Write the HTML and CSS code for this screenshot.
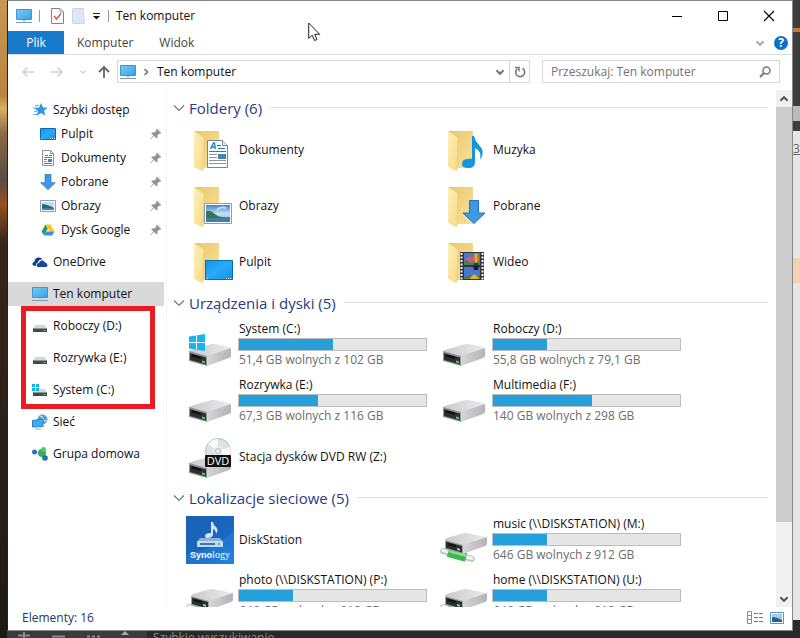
FILE: index.html
```html
<!DOCTYPE html>
<html lang="pl">
<head>
<meta charset="utf-8">
<title>Ten komputer</title>
<link rel="stylesheet" href="styles.css">
</head>
<body>
<svg class="sprite" aria-hidden="true">
  <defs>
    <linearGradient id="g-screen" x1="0" y1="0" x2="1" y2="1"><stop offset="0" stop-color="#7cc9f5"/><stop offset="1" stop-color="#35a3e8"/></linearGradient>
    <linearGradient id="g-desk" x1="0" y1="0" x2="1" y2="1"><stop offset="0" stop-color="#1295e8"/><stop offset=".5" stop-color="#2aa9f8"/><stop offset="1" stop-color="#0e93ea"/></linearGradient>
    <linearGradient id="g-back" x1="0" y1="0" x2="1" y2="1"><stop offset="0" stop-color="#e9c76b"/><stop offset="1" stop-color="#fbe29a"/></linearGradient>
    <linearGradient id="g-flap" x1="0" y1="0" x2="1" y2="1"><stop offset="0" stop-color="#fff0b8"/><stop offset="1" stop-color="#f7d987"/></linearGradient>
    <linearGradient id="g-top" x1="0" y1="0" x2="1" y2="0"><stop offset="0" stop-color="#c9c9cc"/><stop offset="1" stop-color="#ececee"/></linearGradient>
    <linearGradient id="g-side" x1="0" y1="0" x2="1" y2="0"><stop offset="0" stop-color="#d6d6d9"/><stop offset="1" stop-color="#b4b4b8"/></linearGradient>
    <linearGradient id="g-sky" x1="0" y1="0" x2="0" y2="1"><stop offset="0" stop-color="#3f7fd0"/><stop offset=".5" stop-color="#c3e2f5"/><stop offset="1" stop-color="#7fb2dc"/></linearGradient>
    <linearGradient id="g-syn" x1="0" y1="0" x2="1" y2="1"><stop offset="0" stop-color="#1a61b5"/><stop offset=".6" stop-color="#1967c0"/><stop offset="1" stop-color="#1f80dc"/></linearGradient>
  </defs>
  <symbol id="computer" viewBox="0 0 16 16"><path d="M.5 1.5h15v10H.5z" fill="url(#g-screen)" stroke="#4193cc"/><path d="M6 12h4v1.5H6z" fill="#b5d3e8"/><path d="M0 14.5h16" stroke="#7e9bb0"/></symbol>
  <symbol id="folder" viewBox="0 0 48 48"><path d="M8 5h25v37H14z" fill="url(#g-back)"/><path d="M8 5l9 6q1 1 1 2l-1 31q0 1-1 1l-8-4z" fill="url(#g-flap)"/><path d="M18 13l-1 31" stroke="#e6c676" stroke-width=".6"/></symbol>
  <symbol id="drive" viewBox="0 0 48 48"><path d="M3 31q0-1 2-2l20-6h3l16 3q1 0 1 2l-23 8z" fill="url(#g-top)"/><path d="M21 35l24-8v8q0 1-2 2l-22 8z" fill="url(#g-side)"/><path d="M3 30l18 5v10L3 40z" fill="#97979b"/><path d="M4 32l16 4.500v7L4 39z" fill="#2c302e"/><path d="M6 34.500l9 2.500" stroke="#0d0f0e" stroke-width="2"/><path d="M16 39.500l3 .8v2l-3-.8z" fill="#52d35a"/></symbol>
  <symbol id="winlogo" viewBox="0 0 16 17"><path d="M0 2.500l7-1V8H0zM8 1.300L16 0v8H8zM0 9h7v6.500l-7-1zM8 9h8v8l-8-1.300z" fill="#12b7ee"/></symbol>
  <symbol id="netdrive" viewBox="0 0 48 48"><path d="M3 35l29 8" stroke="#c3cac6" stroke-width="6" stroke-linecap="round"/><path d="M3 34.500l29 8" stroke="#f3f7f4" stroke-width="3" stroke-linecap="round"/><path d="M8 36.500l18 5" stroke="#3fb650" stroke-width="9"/><path d="M8 34.500l18 5" stroke="#86e091" stroke-width="3"/><path d="M5 24q0-1 2-2l17-5h3l19 4q1 0 1 2l-24 8z" fill="url(#g-top)"/><path d="M23 29l24-8v7q0 1-2 2l-22 8z" fill="url(#g-side)"/><path d="M5 24l18 5v9L5 33z" fill="#a2a2a5"/><path d="M6 25.500l16 4.500v6.500L6 32z" fill="#2b2d2f"/><path d="M8 28l8 2.300" stroke="#111" stroke-width="2"/><path d="M17 32l3 .8v2l-3-.8z" fill="#8ed8a0"/></symbol>
  <symbol id="arrow" viewBox="0 0 24 24"><path d="M7.500.5h9V13h6.500L12 23.500 1 13h6.500z" fill="#3d99e8" stroke="#2672b8"/></symbol>
  <symbol id="photo" viewBox="0 0 28 21"><path d="M.5.5h27v20H.5z" fill="#fff" stroke="#8d9dab"/><path d="M2 2h24v17H2z" fill="url(#g-sky)"/><path d="M2 8q5-1 9 3t15 3v1H2z" fill="#3a7553"/><path d="M2 15h24v4H2z" fill="#3f7fae"/><path d="M13 7q4-4 9-2" stroke="#fff" stroke-width="2" fill="none" opacity=".6"/></symbol>
  <symbol id="desktop" viewBox="0 0 28 20"><path d="M.5.5h27v19H.5z" fill="url(#g-desk)" stroke="#0b6cad"/><path d="M2 18.500h1m18 0h1m1 0h1m1 0h1" stroke="#fff"/></symbol>
  <symbol id="document" viewBox="0 0 21 28"><path d="M.5.5h15l5 5v22H.5z" fill="#fff" stroke="#7d858c"/><path d="M15.500.5v5h5" fill="#e6eaed" stroke="#7d858c"/><path d="M3.500 9l3-6h1l.8 6M5 7h3" fill="none" stroke="#1683c4" stroke-width="1.300"/><path d="M10 5.500h4M11 8.500h7M2 11.500h17" stroke="#1683c4"/><path d="M2 14.500h8M2 17.500h8M2 20.500h17M2 23.500h17" stroke="#8d969d"/><path d="M11 14h8v5h-8z" fill="#4384b3"/></symbol>
  <symbol id="minidrive" viewBox="0 0 16 16"><path d="M3 7h10l2 4H1z" fill="#d5d5d7"/><path d="M1 10.500h14V14H1z" fill="#45484a"/><path d="M1 10.500h14" stroke="#909396"/><path d="M11.500 12.500h2" stroke="#57d761"/></symbol>
  <symbol id="pin" viewBox="0 0 12 12"><path d="M7 .8L11.200 5l-1 .8-.8-.2-2 2 .2 2-1.100 1L4 8 .8 11.200l-.4-.4L3.500 7.500 1.200 5.200l1-1 2.200.2 2-2-.3-.8z" fill="#8c959d"/></symbol>
  <symbol id="chevron" viewBox="0 0 12 12"><path d="M1 3.500l5 5 5-5" fill="none" stroke="currentColor" stroke-width="1.200"/></symbol>
  <symbol id="chevron-bold" viewBox="0 0 10 10"><path d="M2 3.500l3 3 3-3" fill="none" stroke="currentColor" stroke-width="1.700"/></symbol>
  <symbol id="long-arrow" viewBox="0 0 14 14"><path d="M13 7H2M6.500 2.500L2 7l4.500 4.500" fill="none" stroke="currentColor" stroke-width="1.600"/></symbol>
</svg>

<div class="screen">
  <div class="wallpaper"></div>
  <main class="window">
    <header class="titlebar">
      <svg class="i16"><use href="#computer"/></svg>
      <span class="sep"></span>
      <button class="quick" aria-label="Właściwości"><svg width="13" height="16"><path d="M.5.5h8.500l3.500 3.500v11.500H.5z" fill="#fcfcfc" stroke="#85817c"/><path d="M9 .5V4h3.500" fill="none" stroke="#a5a19c"/><path d="M3 8l2.500 3L10 5.500" fill="none" stroke="#d9623f" stroke-width="1.600"/></svg></button>
      <button class="quick" aria-label="Nowy folder"><svg width="13" height="16"><path d="M.5.5h11v9l1 2v4H.5z" fill="#dbe5f4" stroke="#cbd8ec"/></svg></button>
      <button class="quick" aria-label="Dostosuj pasek"><svg width="7" height="8"><path d="M0 1.500h7" stroke="#222"/><path d="M0 4h7L3.500 7.500z" fill="#111"/></svg></button>
      <span class="sep"></span>
      <h1 class="title">Ten komputer</h1>
      <div class="controls">
        <button aria-label="Minimalizuj"><svg width="12" height="12"><path d="M1 6.500h10" stroke="#000"/></svg></button>
        <button aria-label="Maksymalizuj"><svg width="12" height="12"><path d="M1.500 1.500h9v9h-9z" fill="none" stroke="#000"/></svg></button>
        <button aria-label="Zamknij"><svg width="12" height="12"><path d="M1 1l10 10M11 1L1 11" stroke="#000" stroke-width="1.100"/></svg></button>
      </div>
    </header>

    <div class="tabs">
      <button class="tab tab-file">Plik</button>
      <button class="tab">Komputer</button>
      <button class="tab">Widok</button>
      <div class="tab-tools">
        <button class="expand" aria-label="Rozwiń wstążkę"><svg width="12" height="12"><use href="#chevron-bold"/></svg></button>
        <button class="help" aria-label="Pomoc">?</button>
      </div>
    </div>

    <div class="toolbar">
      <button class="go muted" aria-label="Wstecz"><svg width="14" height="14"><use href="#long-arrow"/></svg></button>
      <button class="go muted" aria-label="Dalej"><svg class="flip" width="14" height="14"><use href="#long-arrow"/></svg></button>
      <button class="go recent muted" aria-label="Ostatnie"><svg width="8" height="8"><use href="#chevron-bold"/></svg></button>
      <button class="go up" aria-label="W górę"><svg width="14" height="14"><path d="M7 13V2M2 7l5-5 5 5" fill="none" stroke="currentColor" stroke-width="1.800"/></svg></button>
      <div class="address">
        <svg class="i16"><use href="#computer"/></svg>
        <svg class="crumb" width="10" height="10"><use href="#chevron-bold"/></svg>
        <span class="path">Ten komputer</span>
        <button class="drop" aria-label="Poprzednie lokalizacje"><svg width="12" height="12"><use href="#chevron-bold"/></svg></button>
        <button class="refresh" aria-label="Odśwież"><svg width="12" height="12"><path d="M8.500 2.300A4.500 4.500 0 1 1 3.200 2.800" fill="none" stroke="currentColor" stroke-width="1.600"/><path d="M1 1.500h4v4" fill="none" stroke="currentColor" stroke-width="1.500"/></svg></button>
      </div>
      <label class="search">
        <input type="text" placeholder="Przeszukaj: Ten komputer" aria-label="Przeszukaj">
        <svg width="12" height="12"><circle cx="7.500" cy="4.500" r="3.500" fill="none" stroke="currentColor" stroke-width="1.500"/><path d="M5 7L1 11" stroke="currentColor" stroke-width="2"/></svg>
      </label>
    </div>

    <div class="panes">
      <nav class="nav">
        <div class="nav-group">
          <a class="nav-item" href="#"><svg class="i16" viewBox="0 0 16 16"><path d="M9 1l2 4.500 4.500.3-3.500 3 1.300 5L9 11l-4.500 3L6 9.500 2.500 6l4.700-.5z" fill="#2699ea"/><path d="M3 3.500h4M1 6h4M2 9.500h3M1 12.500h4" stroke="#58b7f3"/></svg>Szybki dostęp</a>
          <a class="nav-item sub" href="#"><svg class="i16" viewBox="0 0 16 16"><path d="M.5 2.500h15v11H.5z" fill="url(#g-desk)" stroke="#0b6cad"/><path d="M1 12.500h1m8 0h1m1 0h1m1 0h1" stroke="#fff"/></svg>Pulpit<svg class="pin"><use href="#pin"/></svg></a>
          <a class="nav-item sub" href="#"><svg class="i16" viewBox="0 0 16 16"><path d="M2.500.5h8l3 3v12h-11z" fill="#fff" stroke="#8c959c"/><path d="M10.500.5v3h3" fill="none" stroke="#8c959c"/><path d="M5 5.500h3M9 5.500h3M4 7.500h8M4 9.500h3M4 13.500h8" stroke="#2f8dc6"/><path d="M8 9h4v3H8z" fill="#4384b3"/><path d="M4 11.500h3" stroke="#8c959c"/></svg>Dokumenty<svg class="pin"><use href="#pin"/></svg></a>
          <a class="nav-item sub" href="#"><svg class="i16"><use href="#arrow"/></svg>Pobrane<svg class="pin"><use href="#pin"/></svg></a>
          <a class="nav-item sub" href="#"><svg class="i16" viewBox="0 0 16 16"><path d="M.5 2.500h15v11H.5z" fill="#fff" stroke="#8d9dab"/><path d="M2 4h12v8H2z" fill="#b8dcf2"/><path d="M2 6q4 0 12 4v2H2z" fill="#2f6175"/><path d="M2 10h12v2H2z" fill="#3f7fae"/></svg>Obrazy<svg class="pin"><use href="#pin"/></svg></a>
          <a class="nav-item sub" href="#"><svg class="i16" viewBox="0 0 16 16"><path d="M5.500 2.500L8 6.500 4 13.500l-2.500-4z" fill="#1fa463"/><path d="M5.500 2.500h5l4 7h-5z" fill="#fbc91a"/><path d="M6.500 9.500h8L12 13.500H4z" fill="#4285f4"/></svg>Dysk Google<svg class="pin"><use href="#pin"/></svg></a>
        </div>
        <a class="nav-item" href="#"><svg class="i16" viewBox="0 0 16 16"><path d="M1 11.500q-1.500-3 1.500-4Q3 3.500 7 3.500q2.500 0 3.500 2-4-.5-4.500 3Q3.500 9 4 12z" fill="#0c3f91"/><path d="M6 13q-2-.5-1-3 .7-1 2-1 .5-3 3.500-2.500 1.500 0 2.500 2 2.500.5 2.500 2.500T14 13z" fill="#14489c"/></svg>OneDrive</a>
        <a class="nav-item selected" href="#"><svg class="i16"><use href="#computer"/></svg>Ten komputer</a>
        <div class="marked">
          <a class="nav-item" href="#"><svg class="i16"><use href="#minidrive"/></svg>Roboczy (D:)</a>
          <a class="nav-item" href="#"><svg class="i16"><use href="#minidrive"/></svg>Rozrywka (E:)</a>
          <a class="nav-item" href="#"><svg class="i16" viewBox="0 0 16 16"><use href="#minidrive" width="16" height="16"/><path d="M0 2h3v3H0zM4 2h3v3H4zM0 6h3v3H0zM4 6h3v3H4z" fill="#16b5e5"/></svg>System (C:)</a>
        </div>
        <a class="nav-item" href="#"><svg class="i16" viewBox="0 0 16 16"><circle cx="10.500" cy="5.500" r="5" fill="#5d9fca"/><path d="M8 2q3 0 3 3t4 2M7 5q3 1 4 5" stroke="#d4ecf8" fill="none"/><path d="M.5 6.500L11 5v7.500L.5 13z" fill="#43aaed" stroke="#2583bf"/><path d="M3 15h6" stroke="#8fabbd"/></svg>Sieć</a>
        <a class="nav-item" href="#"><svg class="i16" viewBox="0 0 16 16"><path d="M3 7l7-1 3 6" stroke="#b1c9d4" fill="none"/><circle cx="2.500" cy="6" r="2.500" fill="#2d6fb8"/><circle cx="10" cy="7" r="4" fill="#35ae50"/><circle cx="11.500" cy="3.500" r="2.500" fill="#58c56c"/><circle cx="13" cy="12" r="2.800" fill="#1e73b3"/></svg>Grupa domowa</a>
      </nav>

      <div class="content">
        <section>
          <h2><svg width="12" height="12"><use href="#chevron"/></svg>Foldery (6)</h2>
          <div class="tiles">
            <a class="tile" href="#"><svg class="i48" viewBox="0 0 48 48"><use href="#folder" width="48" height="48"/><use href="#document" x="21" y="14" width="21" height="28"/></svg>Dokumenty</a>
            <a class="tile" href="#"><svg class="i48" viewBox="0 0 48 48"><use href="#folder" width="48" height="48"/><path d="M32 10h2q1 5 5 9 7 7 1 15 2-9-5-12v14q0 6-7 6-6 0-6-4 0-5 6-5 3-1 4 0z" fill="#1495dc"/></svg>Muzyka</a>
            <a class="tile" href="#"><svg class="i48" viewBox="0 0 48 48"><use href="#folder" width="48" height="48"/><use href="#photo" x="18" y="21" width="28" height="21"/></svg>Obrazy</a>
            <a class="tile" href="#"><svg class="i48" viewBox="0 0 48 48"><use href="#folder" width="48" height="48"/><use href="#arrow" x="22" y="18" width="24" height="24"/></svg>Pobrane</a>
            <a class="tile" href="#"><svg class="i48" viewBox="0 0 48 48"><use href="#folder" width="48" height="48"/><use href="#desktop" x="19" y="22" width="28" height="20"/></svg>Pulpit</a>
            <a class="tile" href="#"><svg class="i48" viewBox="0 0 48 48"><use href="#folder" width="48" height="48"/><path d="M20 14h24v28H20z" fill="#33353b"/><path d="M21.500 15v27M42.500 15v27" stroke="#f4f4f4" stroke-width="2" stroke-dasharray="2 1.500"/><path d="M24 15h16v12H24zM24 29h16v12H24z" fill="#4777cf"/><path d="M24 24q5-3 8 0t8-1v4H24zM24 39q6-3 16-1v3H24z" fill="#49834b"/><path d="M25 21l5-3 4 3-3 4z" fill="#d95a70"/><ellipse cx="36" cy="20" rx="3" ry="4.500" fill="#e7b52b"/><path d="M34 17v7M38 17v7" stroke="#bd3a22"/><path d="M33 27h6l-1 5h-4z" fill="#1c1d26"/><path d="M30 41q4-9 9 0z" fill="#e9ae2a"/><path d="M34 25h4v3h-4z" fill="#51311c"/></svg>Wideo</a>
          </div>
        </section>
        <section>
          <h2><svg width="12" height="12"><use href="#chevron"/></svg>Urządzenia i dyski (5)</h2>
          <div class="tiles">
            <a class="tile" href="#"><svg class="i48" viewBox="0 0 48 48"><use href="#drive" width="48" height="48"/><use href="#winlogo" x="3" y="13" width="16" height="17"/></svg><span class="info"><span class="name">System (C:)</span><span class="bar"><span class="fill" style="width:50%"></span></span><span class="free">51,4 GB wolnych z 102 GB</span></span></a>
            <a class="tile" href="#"><svg class="i48"><use href="#drive"/></svg><span class="info"><span class="name">Roboczy (D:)</span><span class="bar"><span class="fill" style="width:29%"></span></span><span class="free">55,8 GB wolnych z 79,1 GB</span></span></a>
            <a class="tile" href="#"><svg class="i48"><use href="#drive"/></svg><span class="info"><span class="name">Rozrywka (E:)</span><span class="bar"><span class="fill" style="width:42%"></span></span><span class="free">67,3 GB wolnych z 116 GB</span></span></a>
            <a class="tile" href="#"><svg class="i48"><use href="#drive"/></svg><span class="info"><span class="name">Multimedia (F:)</span><span class="bar"><span class="fill" style="width:53%"></span></span><span class="free">140 GB wolnych z 298 GB</span></span></a>
            <a class="tile" href="#"><svg class="i48" viewBox="0 0 48 48"><use href="#drive" width="48" height="48"/><circle cx="32" cy="18" r="12.500" fill="#dde4e4" stroke="#b4bcbd"/><path d="M32 18L22 11q4-5 10-5zM32 18l10 7q4-6 2-11z" fill="#f8fbfa"/><circle cx="32" cy="18" r="4" fill="#c5cfd1" stroke="#f5f5f5"/><circle cx="32" cy="18" r="1.500" fill="#fff"/><rect x="19" y="22" width="26" height="12" rx="1" fill="#101010"/><text class="dvd" x="32" y="32" text-anchor="middle">DVD</text></svg>Stacja dysków DVD RW (Z:)</a>
          </div>
        </section>
        <section>
          <h2><svg width="12" height="12"><use href="#chevron"/></svg>Lokalizacje sieciowe (5)</h2>
          <div class="tiles">
            <a class="tile" href="#"><svg class="i48" viewBox="0 0 48 48"><path d="M0 0h48v48H0z" fill="url(#g-syn)"/><path d="M0 38Q30 34 48 14v34H0z" fill="#2b8be2" opacity=".35"/><path d="M25 6h2q0 3 3 5 3 3 0 7 0-4-3-5v6q-1 3-5 3-3 0-3-2 0-3 6-3z" fill="#d5e5f5"/><path d="M14 22h20l3 4H11z" fill="#89b1da"/><path d="M11 25h26v6H11z" fill="#c5d9ed"/><path d="M14 28h15" stroke="#3976b3" stroke-width="2"/><path d="M32 28h2" stroke="#2e64a0"/><text class="syn" x="24" y="42" text-anchor="middle"><tspan class="syn-bold">Syno</tspan>logy</text></svg>DiskStation</a>
            <a class="tile" href="#"><svg class="i48"><use href="#netdrive"/></svg><span class="info"><span class="name">music (\\DISKSTATION) (M:)</span><span class="bar"><span class="fill" style="width:29%"></span></span><span class="free">646 GB wolnych z 912 GB</span></span></a>
            <a class="tile" href="#"><svg class="i48"><use href="#netdrive"/></svg><span class="info"><span class="name">photo (\\DISKSTATION) (P:)</span><span class="bar"><span class="fill" style="width:29%"></span></span><span class="free">646 GB wolnych z 912 GB</span></span></a>
            <a class="tile" href="#"><svg class="i48"><use href="#netdrive"/></svg><span class="info"><span class="name">home (\\DISKSTATION) (U:)</span><span class="bar"><span class="fill" style="width:29%"></span></span><span class="free">646 GB wolnych z 912 GB</span></span></a>
          </div>
        </section>
      </div>

      <div class="scroll">
        <button aria-label="Przewiń w górę"><svg class="turn" width="12" height="12"><use href="#chevron-bold"/></svg></button>
        <div class="track"><div class="thumb"></div></div>
        <button aria-label="Przewiń w dół"><svg width="12" height="12"><use href="#chevron-bold"/></svg></button>
      </div>
    </div>

    <footer class="status">
      <span>Elementy: 16</span>
      <button aria-label="Szczegóły"><svg width="17" height="13"><path d="M.5.5h4v12h-4zM.5 4.500h4M.5 8.500h4" fill="none" stroke="#8c8c8c"/><path d="M7 2.500h4m1 0h4M7 6.500h4m1 0h4M7 10.500h4m1 0h4" stroke="#777"/></svg></button>
      <button aria-label="Duże ikony"><svg width="14" height="12" viewBox="0 0 14 12"><path d="M.5.5h13v11H.5z" fill="#fff" stroke="#5596c4"/><path d="M2 2h10v8H2z" fill="#9fcdea"/><path d="M2 5q4 0 10 3v2H2z" fill="#2b5f86"/></svg></button>
    </footer>
  </main>
  <aside class="behind"><span class="count">3</span></aside>
  <div class="dock">
    <div class="dock-tools"><svg width="140" height="7"><path d="M17 1v6M11 4.500h12M45 5.500h13M80 5.500h3m2 0h3m2 0h3" stroke="#8b8b8b" stroke-width="2"/><path d="M118 0l4 4h-8z" fill="#aaa"/></svg></div>
    <span class="dock-search">Szybkie wyszukiwanie</span>
  </div>
</div>
<svg class="cursor" width="13" height="20"><path d="M.7 1v15.500l3.500-3.300 2.300 5.300 2.500-1-2.300-5.200h5z" fill="#fff" stroke="#222"/></svg>
</body>
</html>
```

FILE: styles.css
```css
* { box-sizing: border-box; }

body {
  margin: 0;
  height: 100vh;
  overflow: hidden;
  font: 12px/16px "Open Sans", "Noto Sans", sans-serif;
  color: #111;
}

button {
  display: flex;
  align-items: center;
  justify-content: center;
  padding: 0;
  border: 0;
  background: none;
  font: inherit;
  color: inherit;
}

a { color: inherit; text-decoration: none; }
svg { display: block; flex: none; }
.sprite { position: absolute; width: 0; height: 0; }
.i16 { width: 16px; height: 16px; }
.i48 { width: 48px; height: 48px; }

.screen {
  display: grid;
  grid-template: minmax(0, 1fr) 7px / 7px minmax(0, 1fr) 7px;
  height: 100vh;
}

.wallpaper {
  grid-row: span 2;
  background: linear-gradient(#c8964f, #b98540 15%, #d9ad62 17%, #8c6a45 21%, #5a4b44 28%, #95501f 32%, #36261c 38%, #2b2119 70%, #1d1b12);
}

.window {
  display: flex;
  flex-direction: column;
  background: #fff;
  border: 1px solid #85878a;
  border-left-color: #222;
}

.titlebar { display: flex; align-items: center; height: 30px; padding-left: 8px; }
.titlebar .sep { width: 1px; height: 12px; margin: 0 11px 0 7px; background: #999; }
.titlebar .quick { margin-right: 8px; }
.titlebar .quick + .sep { margin: 0 7px 0 0; }
.title { margin: 0; font-size: 12px; font-weight: 400; }
.controls { display: flex; margin-left: auto; }
.controls button { width: 46px; height: 30px; }

.tabs { display: flex; height: 24px; border-bottom: 1px solid #dadbdc; }
.tab { padding: 0 13px; color: #444; }
.tab-file { width: 56px; background: #1979ca; color: #fff; }
.tab-tools { display: flex; align-items: center; gap: 8px; margin-left: auto; padding-right: 4px; }
.expand { color: #aaa; }
.help { width: 14px; height: 14px; border-radius: 50%; background: #0c6fc8; color: #fff; font-weight: 700; }

.toolbar { display: flex; align-items: center; height: 35px; padding: 0 12px 2px 13px; }
.go { width: 14px; margin-right: 15px; color: #666; }
.muted { color: #d2d2d2; }
.recent { width: 8px; margin-right: 10px; }
.up { margin-right: 6px; }
.flip { transform: scaleX(-1); }
.address { display: flex; flex: 1; align-items: center; height: 23px; padding-left: 2px; border: 1px solid #d9d9d9; }
.crumb { margin: 0 6px 0 5px; color: #777; transform: rotate(-90deg); }
.path { flex: 1; }
.drop { width: 18px; color: #777; }
.refresh { width: 20px; height: 100%; border-left: 1px solid #d9d9d9; color: #777; }
.search { display: flex; align-items: center; width: 238px; height: 23px; margin-left: 12px; padding: 0 8px; border: 1px solid #d9d9d9; color: #777; }
.search input { flex: 1; min-width: 0; padding: 0; border: 0; outline: 0; font: inherit; background: none; }
.search input::placeholder { color: #737373; opacity: 1; }

.panes { display: flex; flex: 1; min-height: 0; }

.nav { display: flex; flex-direction: column; gap: 8px; width: 159px; padding: 8px 2px 0 0; border-right: 1px solid #f3f3f3; }
.nav-item { display: flex; align-items: center; gap: 5px; height: 24px; padding-left: 24px; }
.sub { padding-left: 32px; }
.pin { width: 12px; height: 12px; margin: 0 2px 0 auto; }
.selected { background: #d9d9d9; }
.marked { position: relative; display: flex; flex-direction: column; gap: 8px; }
.marked::after { content: ""; position: absolute; inset: -8px 9px -7px 13px; border: 5px solid #e81c24; pointer-events: none; }

.content { flex: 1; min-width: 0; padding-top: 5px; overflow: hidden; }
h2 { display: flex; align-items: center; gap: 4px; height: 27px; margin: 0; padding: 0 8px 2px 6px; font-size: 15px; line-height: 20px; font-weight: 400; color: #2b3a82; }
h2 svg { color: #777; }
h2::after { content: ""; flex: 1; height: 1px; margin-left: 4px; background: #e2e2e2; }
.tiles { display: grid; grid-template-columns: repeat(auto-fill, 254px); padding-left: 19px; }
.tile { display: flex; align-items: center; gap: 5px; height: 56px; }
.info { display: flex; flex-direction: column; gap: 1px; width: 189px; margin-left: -1px; padding-bottom: 2px; }
.name, .free { padding-left: 1px; }
.bar { height: 13px; border: 1px solid #bcbcbc; background: #e6e6e6; }
.fill { display: block; height: 100%; background: #26a0da; }
.free { color: #6d6d6d; }
.dvd { font: 11px "Open Sans", sans-serif; fill: #fff; }
.syn { font: 10px "Liberation Serif", serif; fill: #fff; }
.syn-bold { font: bold 9px "Liberation Sans", sans-serif; }

.scroll { display: flex; flex-direction: column; width: 16px; background: #f0f0f0; color: #555; }
.scroll button { height: 17px; }
.track { flex: 1; }
.thumb { height: 86%; background: #cdcdcd; }
.turn { transform: rotate(180deg); }

.status { display: flex; align-items: center; gap: 6px; height: 23px; padding: 0 8px 2px 14px; color: #1e395b; }
.status span { flex: 1; }

.behind {
  overflow: hidden;
  padding-top: 141px;
  background:
    linear-gradient(#c77a35, #c77a35) 0 28px / 100% 4px no-repeat,
    linear-gradient(#f2d3b0, #f2d3b0) 0 258px / 100% 25px no-repeat,
    linear-gradient(#bbb, #bbb) 0 106px / 100% 15px no-repeat,
    linear-gradient(#2b2b2b, #2b2b2b) 0 620px / 100% 20px no-repeat,
    linear-gradient(#3d3d3d 131px, #e6e6e6 131px);
}
.count { color: #666; text-decoration: underline; }

.dock { grid-column: span 2; display: flex; overflow: hidden; background: #292929; color: #8b8b8b; }
.dock-tools { width: 140px; background: #3b3b3b; }
.dock-search { padding-left: 6px; line-height: 14px; }

.cursor { position: absolute; left: 308px; top: 22px; }
```
